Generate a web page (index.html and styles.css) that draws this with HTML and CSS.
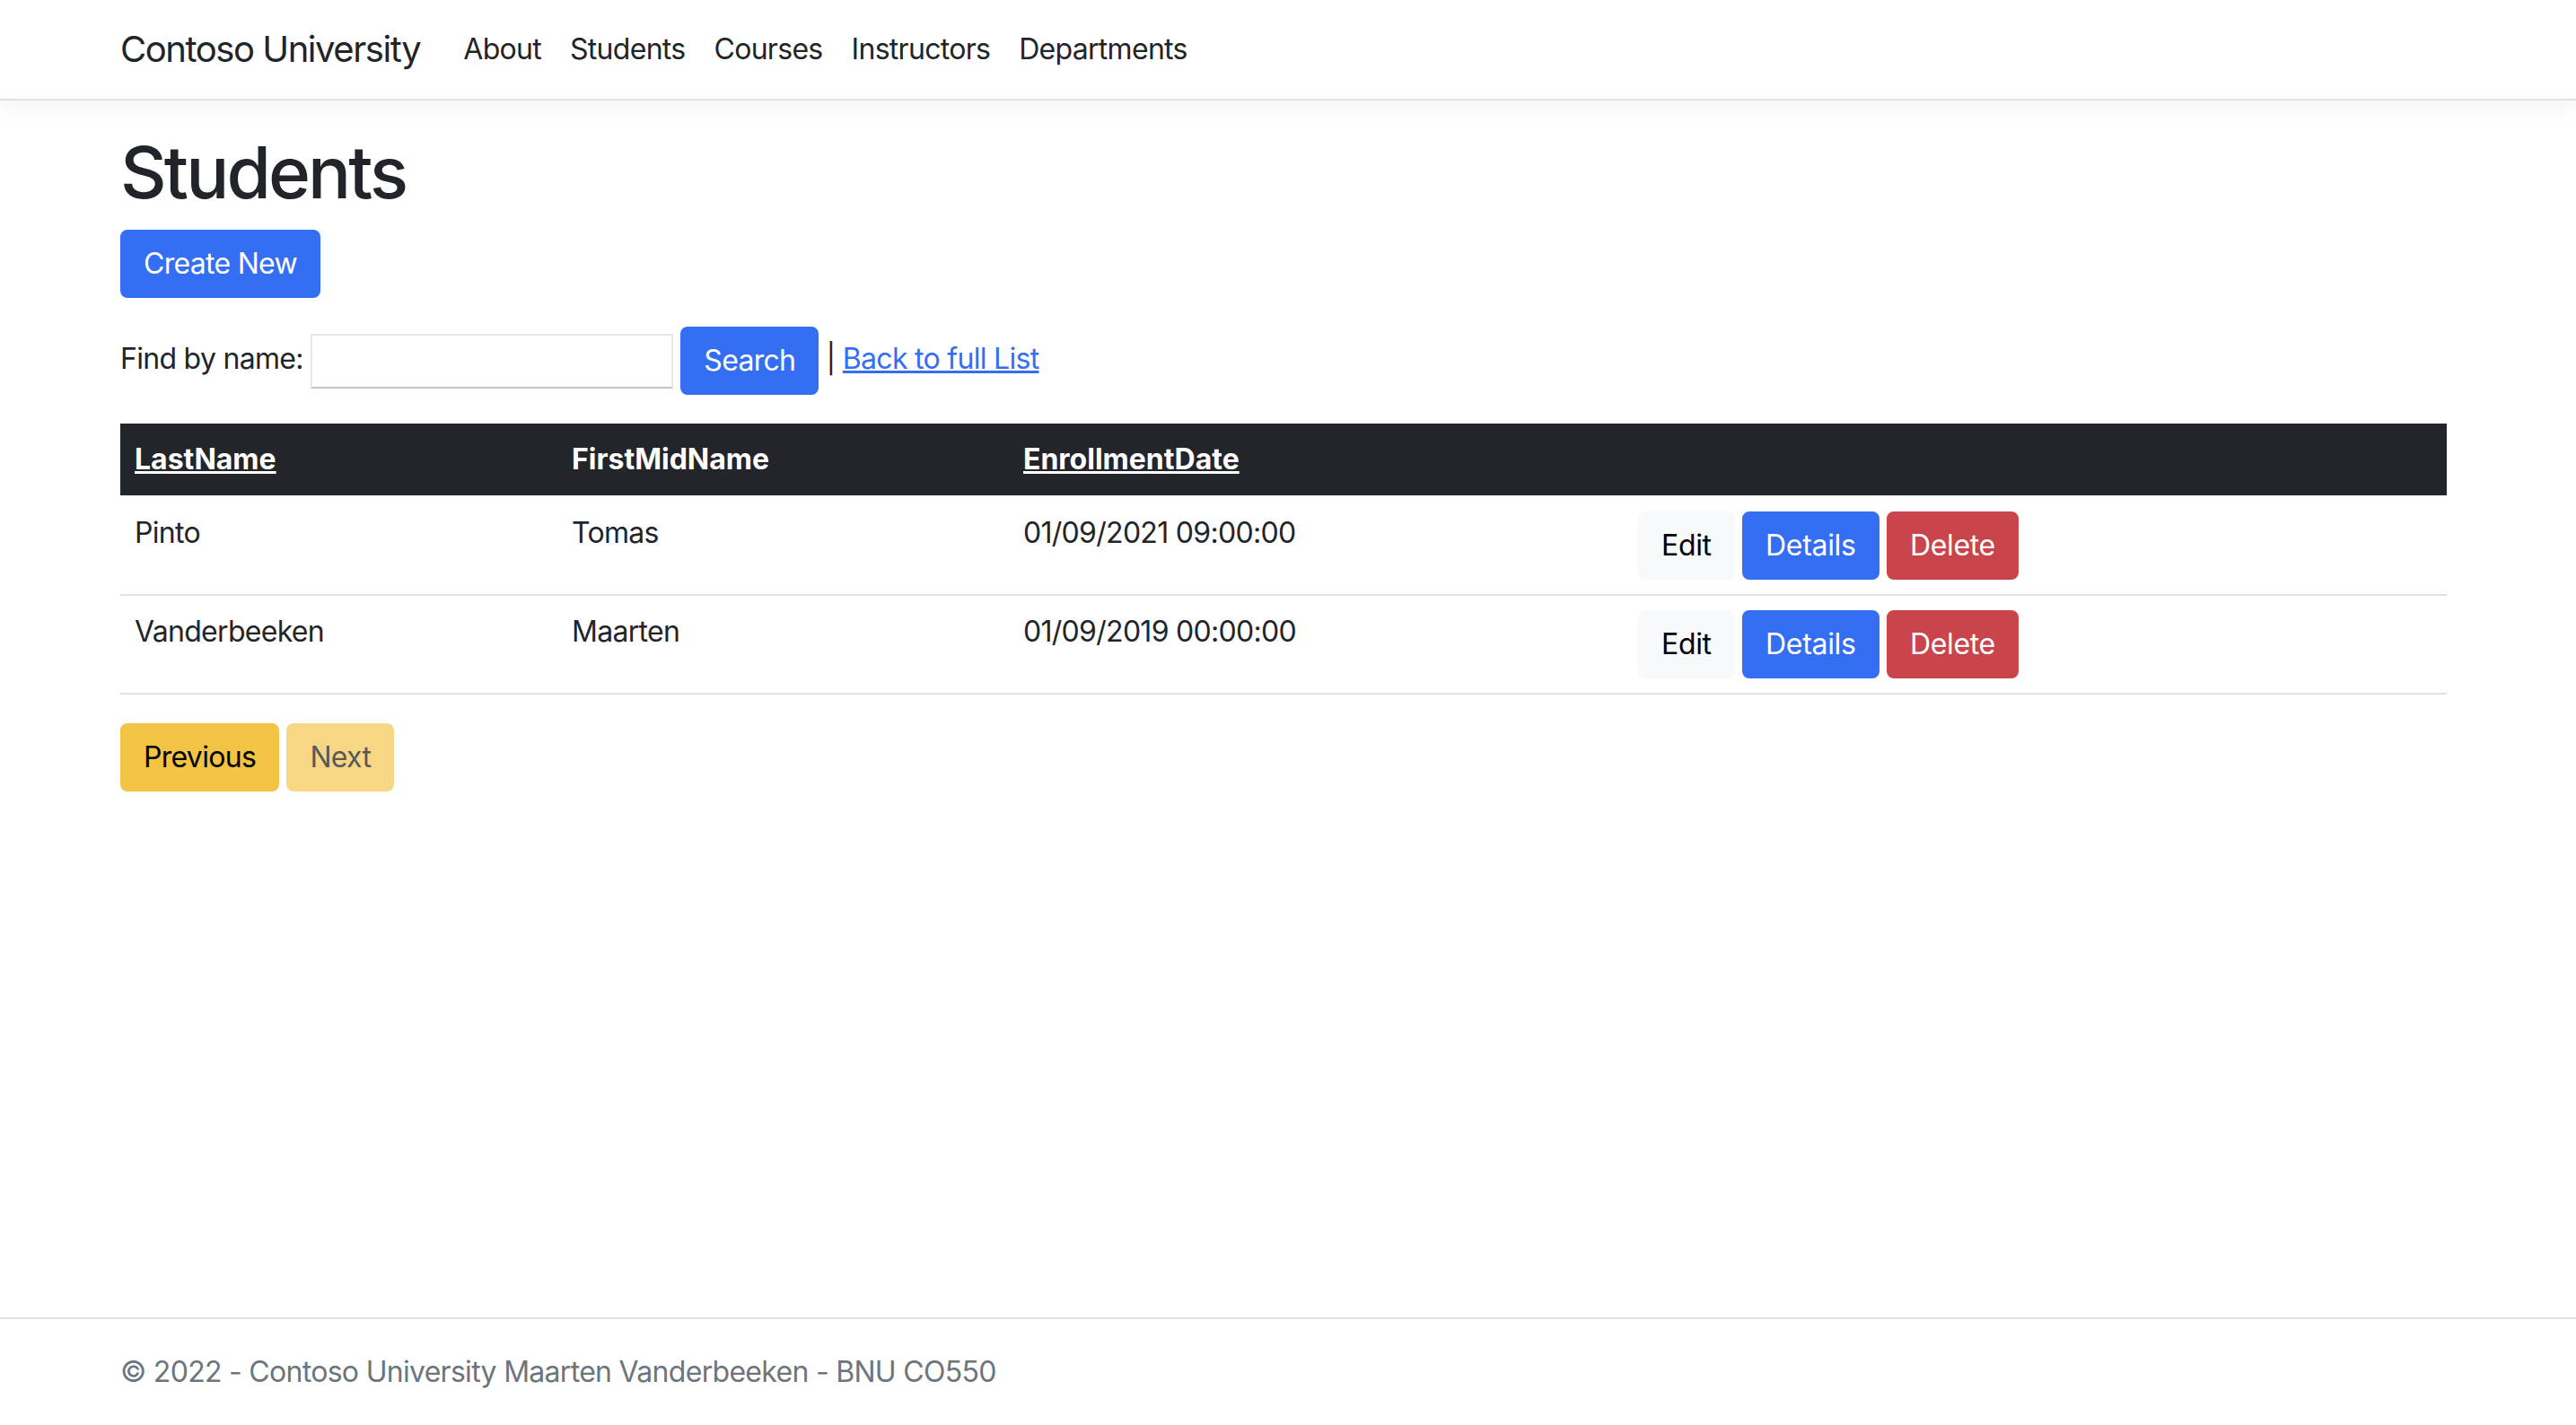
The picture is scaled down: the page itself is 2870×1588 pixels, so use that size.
FILE: index.html
```html
<!DOCTYPE html>
<html lang="en">
<head>
<meta charset="utf-8">
<title>Students - Contoso University</title>
<link rel="stylesheet" href="styles.css">
</head>
<body>
<header class="site-header">
  <nav class="navbar">
    <div class="container nav-inner">
      <a class="brand" href="#">Contoso University</a>
      <ul class="nav-list">
        <li><a class="nav-link" href="#">About</a></li>
        <li><a class="nav-link" href="#">Students</a></li>
        <li><a class="nav-link" href="#">Courses</a></li>
        <li><a class="nav-link" href="#">Instructors</a></li>
        <li><a class="nav-link" href="#">Departments</a></li>
      </ul>
    </div>
  </nav>
</header>

<main class="container main">
  <h1 class="title">Students</h1>
  <p class="para"><a class="btn btn-primary" href="#">Create New</a></p>

  <form class="search-form">
    <p class="para">
      Find by name: <input class="search-input" type="text" name="SearchString"> <input class="btn btn-primary" type="submit" value="Search"> | <a class="link" href="#">Back to full List</a>
    </p>
  </form>

  <table class="table">
    <colgroup>
      <col class="col-last">
      <col class="col-first">
      <col class="col-date">
      <col>
    </colgroup>
    <thead class="table-head">
      <tr>
        <th><a class="head-link" href="#">LastName</a></th>
        <th>FirstMidName</th>
        <th><a class="head-link" href="#">EnrollmentDate</a></th>
        <th></th>
      </tr>
    </thead>
    <tbody>
      <tr>
        <td>Pinto</td>
        <td>Tomas</td>
        <td>01/09/2021 09:00:00</td>
        <td><a class="btn btn-light" href="#">Edit</a> <a class="btn btn-primary" href="#">Details</a> <a class="btn btn-danger" href="#">Delete</a></td>
      </tr>
      <tr>
        <td>Vanderbeeken</td>
        <td>Maarten</td>
        <td>01/09/2019 00:00:00</td>
        <td><a class="btn btn-light" href="#">Edit</a> <a class="btn btn-primary" href="#">Details</a> <a class="btn btn-danger" href="#">Delete</a></td>
      </tr>
    </tbody>
  </table>

  <div class="pager"><a class="btn btn-warning" href="#">Previous</a> <a class="btn btn-warning disabled" href="#">Next</a></div>
</main>

<footer class="footer">
  <div class="container footer-inner">&copy; 2022 - Contoso University Maarten Vanderbeeken - BNU CO550</div>
</footer>
</body>
</html>
```

FILE: styles.css
```css
* { box-sizing: border-box; }

html, body { height: 100%; }

body {
  margin: 0;
  font-family: Inter, "Liberation Sans", sans-serif;
  font-size: 32px;
  line-height: 1.5;
  letter-spacing: -0.022em;
  color: #212529;
  background: #fff;
  display: flex;
  flex-direction: column;
  min-height: 100vh;
}

.container {
  width: 2592px;
  margin-left: 134px;
}

.site-header { margin-bottom: 32px; }

.navbar {
  height: 112px;
  background: #fff;
  border-bottom: 2px solid #dee2e6;
  box-shadow: 0 8px 24px rgba(0, 0, 0, 0.05);
  display: flex;
  align-items: center;
}

.nav-inner {
  display: flex;
  align-items: center;
}

.brand {
  font-size: 40px;
  line-height: 60px;
  letter-spacing: -0.036em;
  color: #212529;
  text-decoration: none;
  margin-right: 32px;
  white-space: nowrap;
}

.nav-list {
  list-style: none;
  margin: 0;
  padding: 0;
  display: flex;
}

.nav-link {
  display: block;
  padding: 16px 16px;
  color: #212529;
  text-decoration: none;
}

.main { flex: 1 0 auto; }

.title {
  font-size: 80px;
  font-weight: 500;
  line-height: 1.2;
  letter-spacing: -0.036em;
  margin: 0 0 16px;
}

.para { margin: 0 0 32px; }

.search-form { margin: 0; }

.btn {
  display: inline-block;
  font-family: inherit;
  font-size: 32px;
  line-height: 48px;
  letter-spacing: -0.022em;
  padding: 12px 24px;
  border: 2px solid transparent;
  border-radius: 8px;
  text-decoration: none;
  vertical-align: middle;
  cursor: pointer;
}

.table .btn { letter-spacing: -0.01em; }

.btn-primary { background: #336ef3; border-color: #336ef3; color: #fff; }
.btn-light { background: #f8f9fa; border-color: #f8f9fa; color: #000; }
.btn-danger { background: #c9454b; border-color: #c9454b; color: #fff; }
.btn-warning { background: #f3c343; border-color: #f3c343; color: #000; }
.btn.disabled { opacity: 0.65; }

.search-input {
  width: 404px;
  height: 61px;
  font-family: inherit;
  font-size: 32px;
  line-height: 48px;
  padding: 2px 4px;
  border: 2px solid #e7e7e7;
  border-bottom-color: #c4c4c4;
  vertical-align: middle;
}

.link { color: #336ef3; text-decoration: underline; }

.table {
  width: 100%;
  table-layout: fixed;
  border-collapse: collapse;
  margin-bottom: 32px;
}

.col-last { width: 487px; }
.col-first { width: 503px; }
.col-date { width: 685px; }

.table th, .table td {
  padding: 16px;
  text-align: left;
  vertical-align: top;
}

.table-head th {
  background: #222529;
  color: #fff;
  font-weight: 700;
  letter-spacing: 0;
  border-bottom: 2px solid #f3f4f5;
}

.head-link { color: #fff; text-decoration: underline; }

.table td { border-bottom: 2px solid #dee2e6; }

.pager { margin-bottom: 32px; }

.footer {
  border-top: 2px solid #dee2e6;
  color: #6c757d;
  line-height: 118px;
  white-space: nowrap;
  flex-shrink: 0;
}
```
